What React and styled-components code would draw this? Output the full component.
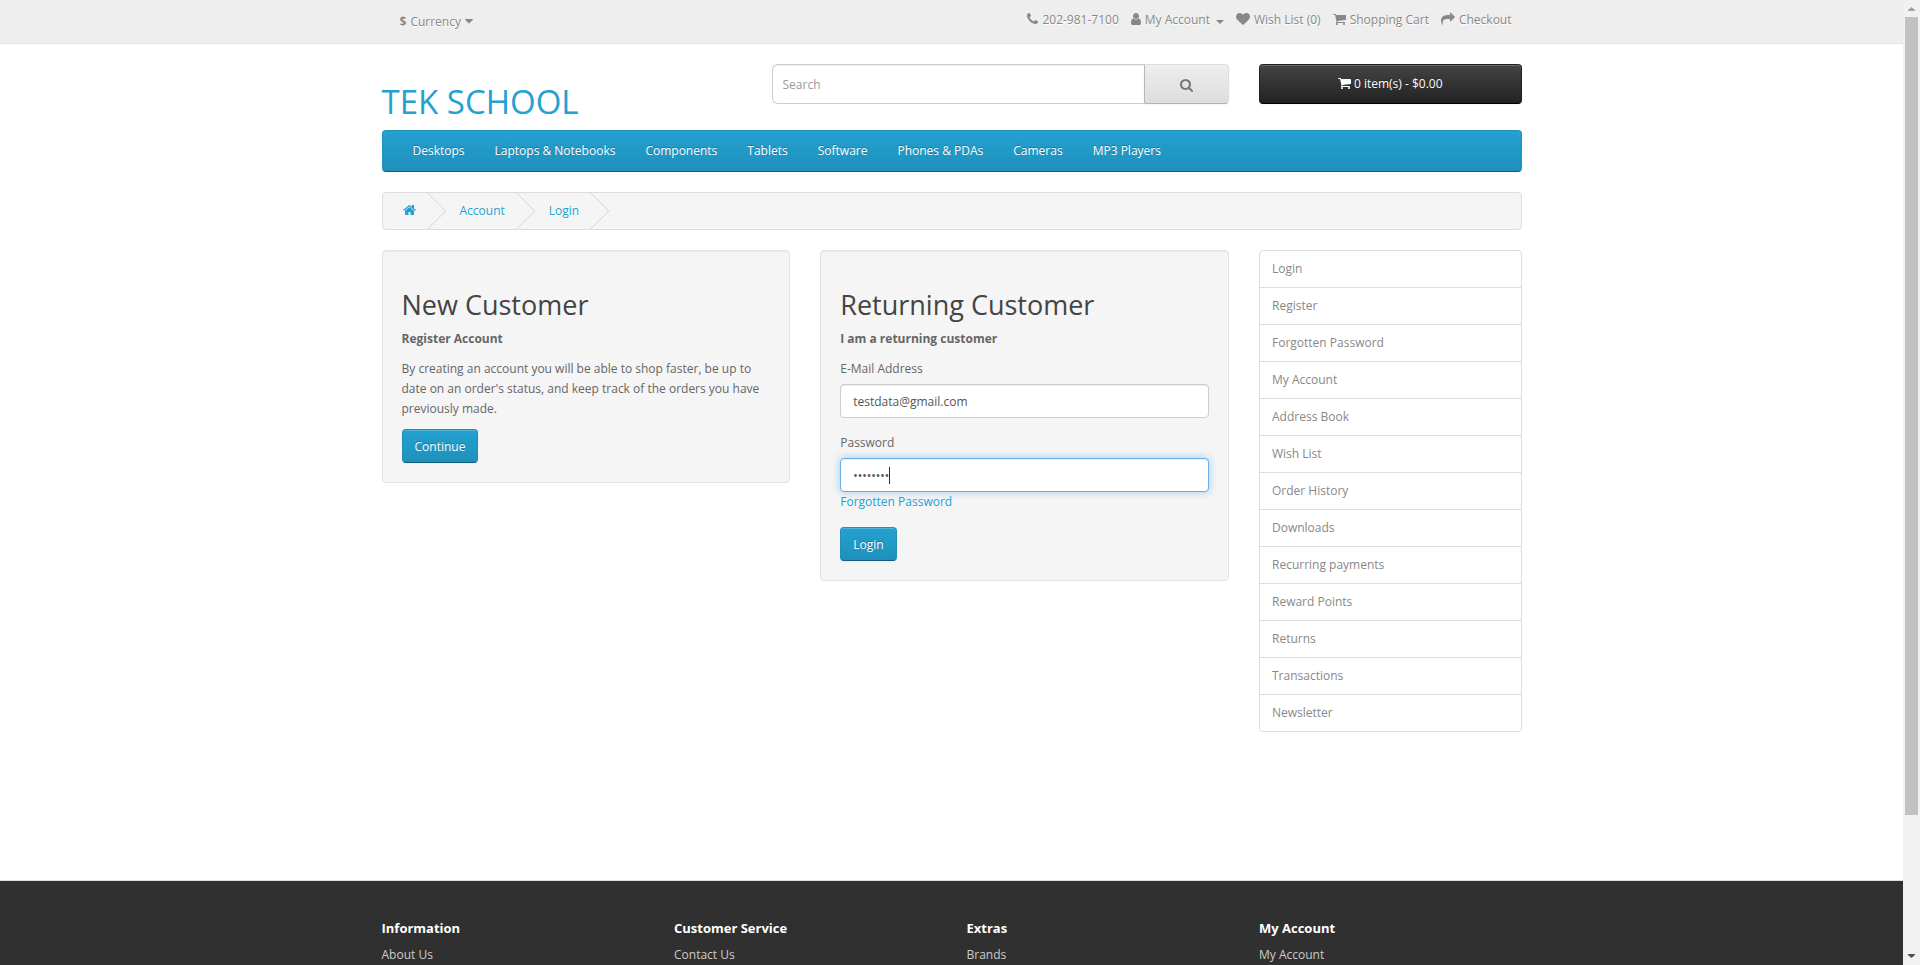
import React from "react";
import styled, { createGlobalStyle, css } from "styled-components";

const GlobalStyle = createGlobalStyle`
  *, *::before, *::after { box-sizing: border-box; }
  body {
    margin: 0;
    background: #fff;
    color: #666;
    font: 400 12px/20px "Open Sans", sans-serif;
  }
  a { color: #23a1d1; text-decoration: none; }
  h1, h2, h5, p, ul, ol { margin: 0; padding: 0; }
  ul, ol { list-style: none; }
  button, input { font: inherit; }
`;

/* ---------- icons: [first x, width, path] on a 1792 unit em ---------- */

const glyphs = {
  phone: [192, 1408, "M1600 1240q0 27-10 70.5t-21 68.5q-21 50-122 106-94 51-186 51-27 0-53-3.5t-57.5-12.5-47-14.5-55.5-20.5-49-18q-98-35-175-83-127-79-264-216t-216-264q-48-77-83-175-3-9-18-49t-20.5-55.5-14.5-47-12.5-57.5-3.5-53q0-92 51-186 56-101 106-122 25-11 68.5-21t70.5-10q14 0 21 3 18 6 53 76 11 19 30 54t35 63.5 31 53.5q3 4 17.5 25t21.5 35.5 7 28.5q0 20-28.5 50t-62 55-62 53-28.5 46q0 9 5 22.5t8.5 20.5 14 24 11.5 19q76 137 174 235t235 174q2 1 19 11.5t24 14 20.5 8.5 22.5 5q18 0 46-28.5t53-62 55-62 50-28.5q14 0 28.5 7t35.5 21.5 25 17.5q25 15 53.5 31t63.5 35 54 30q70 35 76 53 3 7 3 21z"],
  user: [256, 1280, "M1536 1399q0 109-62.5 187t-150.5 78h-854q-88 0-150.5-78t-62.5-187q0-85 8.5-160.5t31.5-152 58.5-131 94-89 134.5-34.5q131 128 313 128t313-128q76 0 134.5 34.5t94 89 58.5 131 31.5 152 8.5 160.5zm-256-887q0 159-112.5 271.5t-271.5 112.5-271.5-112.5-112.5-271.5 112.5-271.5 271.5-112.5 271.5 112.5 112.5 271.5z"],
  heart: [0, 1792, "M896 1664q-26 0-44-18l-624-602q-10-8-27.5-26t-55.5-65.5-68-97.5-53.5-121-23.5-138q0-220 127-344t351-124q62 0 126.5 21.5t120 58 95.5 68.5 76 68q36-36 76-68t95.5-68.5 120-58 126.5-21.5q224 0 351 124t127 344q0 221-229 450l-623 600q-18 18-44 18z"],
  cart: [64, 1664, "M704 1536q0 52-38 90t-90 38-90-38-38-90 38-90 90-38 90 38 38 90zm896 0q0 52-38 90t-90 38-90-38-38-90 38-90 90-38 90 38 38 90zm128-1088v512q0 24-16.5 42.5t-40.5 21.5l-1044 122q13 60 13 70 0 16-24 64h920q26 0 45 19t19 45-19 45-45 19h-1024q-26 0-45-19t-19-45q0-11 8-31.5t16-36 21.5-40 15.5-29.5l-177-823h-204q-26 0-45-19t-19-45 19-45 45-19h256q16 0 28.5 6.5t19.5 15.5 13 24.5 8 26 5.5 29.5 4.5 26h1201q26 0 45 19t19 45z"],
  share: [0, 1792, "M1792 640q0 26-19 45l-512 512q-19 19-45 19t-45-19-19-45v-256h-224q-98 0-175.5 6t-154 21.5-133 42.5-105.5 69.5-80 101-48.5 138.5-17.5 181q0 55 5 123 0 6 2.5 23.5t2.5 26.5q0 15-8.5 25t-23.5 10q-16 0-28-17-7-9-13-22t-13.5-30-10.5-24q-127-285-127-451 0-199 53-333 162-403 875-403h224v-256q0-26 19-45t45-19 45 19l512 512q19 19 19 45z"],
  search: [64, 1664, "M1216 832q0-185-131.5-316.5t-316.5-131.5-316.5 131.5-131.5 316.5 131.5 316.5 316.5 131.5 316.5-131.5 131.5-316.5zm512 832q0 52-38 90t-90 38q-54 0-90-38l-343-342q-179 124-399 124-143 0-273.5-55.5t-225-150-150-225-55.5-273.5 55.5-273.5 150-225 225-150 273.5-55.5 273.5 55.5 225 150 150 225 55.5 273.5q0 220-124 399l343 343q37 37 37 90z"],
  home: [64, 1664, "M1472 992v480q0 26-19 45t-45 19h-384v-384h-256v384h-384q-26 0-45-19t-19-45v-480q0-1 .5-3t.5-3l575-474 575 474q1 2 1 6zm223-69l-62 74q-8 9-21 11h-3q-13 0-21-7l-692-577-692 577q-12 8-24 7-13-2-21-11l-62-74q-8-10-7-23.5t11-21.5l719-599q32-26 76-26t76 26l244 204v-195q0-14 9-23t23-9h192q14 0 23 9t9 23v408l219 182q10 8 11 21.5t-7 23.5z"],
  caret: [384, 1024, "M1408 704q0 26-19 45l-448 448q-19 19-45 19t-45-19l-448-448q-19-19-19-45t19-45 45-19h896q26 0 45 19t19 45z"],
};

const IconSvg = styled.svg`
  display: block;
  flex: none;
  height: 14px;
  margin-bottom: 2px;
  fill: currentColor;
`;

function Icon({ name }) {
  const [x, width, d] = glyphs[name];
  return (
    <IconSvg viewBox={`${x} 0 ${width} 1792`} width={(width / 1792) * 14} aria-hidden="true">
      <path d={d} />
    </IconSvg>
  );
}

/* ---------- page frame ---------- */

const Frame = styled.div`
  display: flex;
  height: 100vh;
  overflow: hidden;
`;

const Page = styled.div`
  display: flex;
  flex: 1;
  flex-direction: column;
  min-width: 0;
  overflow: hidden;
`;

const Track = styled.div`
  display: flex;
  flex: none;
  flex-direction: column;
  width: 17px;
  background: #f1f1f1;
`;

const TrackArrow = styled.svg`
  flex: none;
  width: 17px;
  height: 17px;
  fill: ${(p) => p.$fill};
`;

const TrackBody = styled.div`
  flex: 1;
  padding: 0 2px;
`;

const Thumb = styled.div`
  height: calc(100% * 6 / 7);
  background: #c1c1c1;
`;

const Container = styled.div`
  width: 100%;
  max-width: 1170px;
  margin: 0 auto;
  padding: 0 15px;
`;

const Row = styled.div`
  display: flex;
  align-items: flex-start;
  margin: 0 -15px;
`;

const Col = styled.div`
  flex: 0 0 calc(100% * ${(p) => p.$span} / 12);
  min-width: 0;
  padding: 0 15px;
`;

/* ---------- top bar ---------- */

const TopBar = styled.nav`
  flex: none;
  min-height: 44px;
  padding: 4px 0 3px;
  margin-bottom: 20px;
  background: #eee;
  border-bottom: 1px solid #e2e2e2;
`;

const TopInner = styled(Container)`
  display: flex;
  justify-content: space-between;
`;

const CurrencyButton = styled.button`
  display: flex;
  align-items: center;
  gap: 4px;
  margin-left: 5px;
  padding: 8px 13px 6px;
  border: 0;
  background: none;
  color: #888;
  text-shadow: 0 1px 0 #fff;
`;

const TopLinks = styled.ul`
  display: flex;
  gap: 12px;
  padding: 6px 10px 0 0;
`;

const TopLink = styled.a`
  display: flex;
  align-items: center;
  gap: 4px;
  color: #888;
  text-shadow: 0 1px 0 #fff;
`;

const Caret = styled.span`
  margin: 3px 0 0 2px;
  border-top: 4px solid;
  border-right: 4px solid transparent;
  border-left: 4px solid transparent;
`;

/* ---------- header ---------- */

const Header = styled(Container).attrs({ as: "header" })`
  flex: none;
`;

const Logo = styled.h1`
  padding-top: 20px;
  font-weight: 400;
  font-size: 33px;
  line-height: 36px;
`;

const HeaderRow = styled(Row)`
  height: 66px;
`;

const gradientButton = css`
  border: 1px solid;
  border-radius: 4px;
  box-shadow: inset 0 1px 0 rgba(255, 255, 255, 0.2), 0 1px 2px rgba(0, 0, 0, 0.05);
`;

const SearchForm = styled.form`
  display: flex;
  height: 40px;
`;

const SearchInput = styled.input`
  flex: 1;
  min-width: 0;
  padding: 2px 10px 0;
  border: 1px solid #ccc;
  border-right: 0;
  border-radius: 6px 0 0 6px;
  box-shadow: inset 0 1px 1px rgba(0, 0, 0, 0.075);
  color: #555;
  &::placeholder { color: #999; }
`;

const SearchButton = styled.button`
  ${gradientButton}
  padding: 4px 35px 0;
  border-color: #ddd #ddd #b3b3b3 #b7b7b7;
  border-radius: 0 4px 4px 0;
  background: linear-gradient(#eee, #ddd);
  color: #777;
`;

const CartButton = styled.button`
  ${gradientButton}
  display: flex;
  align-items: center;
  justify-content: center;
  gap: 3px;
  width: 100%;
  height: 40px;
  border-color: #222 #222 #000;
  background: linear-gradient(#444, #222);
  color: #fff;
  text-shadow: 0 -1px 0 rgba(0, 0, 0, 0.25);
`;

const Menu = styled.nav`
  margin-bottom: 20px;
  padding: 0 15px;
  border: 1px solid;
  border-color: #1f90bb #1f90bb #145e7a;
  border-radius: 4px;
  background: linear-gradient(#23a1d1, #1f90bb);
`;

const MenuList = styled.ul`
  display: flex;
`;

const MenuLink = styled.a`
  display: block;
  padding: 10px 15px;
  color: #fff;
  text-shadow: 0 -1px 0 rgba(0, 0, 0, 0.25);
`;

/* ---------- main ---------- */

const Main = styled(Container).attrs({ as: "main" })`
  flex: none;
`;

const Breadcrumb = styled.ol`
  display: flex;
  gap: 4px;
  margin-bottom: 20px;
  padding: 8px 0;
  overflow: hidden;
  border: 1px solid #ddd;
  border-radius: 4px;
  background: #f5f5f5;
`;

const Crumb = styled.li`
  position: relative;
  padding: 0 20px;
  text-shadow: 0 1px 0 #fff;
  &::after {
    content: "";
    position: absolute;
    top: -3px;
    right: -5px;
    width: 26px;
    height: 26px;
    border-right: 1px solid #ddd;
    border-bottom: 1px solid #ddd;
    transform: rotate(-45deg);
  }
`;

const CrumbLink = styled.a`
  display: flex;
  align-items: center;
  height: 20px;
`;

const Content = styled(Col)`
  min-height: 600px;
`;

const Well = styled.section`
  padding: 19px;
  border: 1px solid #e3e3e3;
  border-radius: 4px;
  background: #f5f5f5;
  box-shadow: inset 0 1px 1px rgba(0, 0, 0, 0.05);
`;

const Title = styled.h2`
  margin: 20px 0 10px;
  color: #444;
  font-weight: 400;
  font-size: 27px;
  line-height: 29px;
`;

const Paragraph = styled.p`
  margin-bottom: 10px;
`;

const PrimaryButton = styled.button`
  ${gradientButton}
  display: block;
  height: 34px;
  padding: 2px 12px 0;
  border-color: #1f90bb #1f90bb #145e7a;
  background: linear-gradient(#23a1d1, #1f90bb);
  color: #fff;
  text-shadow: 0 -1px 0 rgba(0, 0, 0, 0.25);
`;

const Field = styled.div`
  margin-bottom: 15px;
`;

const Label = styled.label`
  display: block;
  margin-bottom: 5px;
`;

const focusRing = css`
  border-color: #66afe9;
  box-shadow: inset 0 1px 1px rgba(0, 0, 0, 0.075), 0 0 8px rgba(102, 175, 233, 0.6);
`;

const TextInput = styled.input`
  display: block;
  width: 100%;
  height: 34px;
  padding: 6px 12px;
  border: 1px solid #ccc;
  border-radius: 4px;
  outline: 0;
  background: #fff;
  box-shadow: inset 0 1px 1px rgba(0, 0, 0, 0.075);
  color: #555;
  ${(p) => p.$active && focusRing}
`;

const CursorBox = styled.div`
  position: relative;
  &::after {
    content: "";
    position: absolute;
    top: 9px;
    left: 49px;
    width: 1px;
    height: 17px;
    background: #333;
  }
`;

const LinkList = styled.ul`
  overflow: hidden;
  border: 1px solid #ddd;
  border-radius: 4px;
`;

const LinkItem = styled.li`
  & + & { border-top: 1px solid #ddd; }
`;

const SideLink = styled.a`
  display: block;
  padding: 8px 12px;
  color: #888;
`;

/* ---------- footer ---------- */

const Footer = styled.footer`
  flex: 1 0 auto;
  margin-top: 30px;
  padding-top: 30px;
  border-top: 1px solid #ddd;
  background: #303030;
`;

const FooterTitle = styled.h5`
  margin: 10px 0;
  color: #fff;
  font-weight: 700;
  font-size: 13px;
  line-height: 14px;
`;

const FooterLink = styled.a`
  color: #ccc;
`;

const menu = ["Desktops", "Laptops & Notebooks", "Components", "Tablets", "Software", "Phones & PDAs", "Cameras", "MP3 Players"];

const sideLinks = [
  "Login", "Register", "Forgotten Password", "My Account", "Address Book", "Wish List", "Order History",
  "Downloads", "Recurring payments", "Reward Points", "Returns", "Transactions", "Newsletter",
];

const topLinks = [
  { icon: "phone", text: "202-981-7100" },
  { icon: "user", text: "My Account", caret: true },
  { icon: "heart", text: "Wish List (0)" },
  { icon: "cart", text: "Shopping Cart" },
  { icon: "share", text: "Checkout" },
];

const footerColumns = [
  ["Information", "About Us"],
  ["Customer Service", "Contact Us"],
  ["Extras", "Brands"],
  ["My Account", "My Account"],
];

export default function App() {
  return (
    <Frame>
      <GlobalStyle />
      <Page>
        <TopBar aria-label="Account">
          <TopInner>
            <CurrencyButton type="button">
              <strong>$</strong>
              <span>Currency</span>
              <Icon name="caret" />
            </CurrencyButton>
            <TopLinks>
              {topLinks.map((link) => (
                <li key={link.text}>
                  <TopLink href="#">
                    <Icon name={link.icon} />
                    <span>{link.text}</span>
                    {link.caret && <Caret />}
                  </TopLink>
                </li>
              ))}
            </TopLinks>
          </TopInner>
        </TopBar>

        <Header>
          <HeaderRow>
            <Col $span={4}>
              <Logo><a href="#">TEK SCHOOL</a></Logo>
            </Col>
            <Col $span={5}>
              <SearchForm role="search">
                <SearchInput type="text" placeholder="Search" aria-label="Search" />
                <SearchButton type="button" aria-label="Submit search"><Icon name="search" /></SearchButton>
              </SearchForm>
            </Col>
            <Col $span={3}>
              <CartButton type="button">
                <Icon name="cart" />
                <span>0 item(s) - $0.00</span>
              </CartButton>
            </Col>
          </HeaderRow>
          <Menu aria-label="Categories">
            <MenuList>
              {menu.map((item) => (
                <li key={item}><MenuLink href="#">{item}</MenuLink></li>
              ))}
            </MenuList>
          </Menu>
        </Header>

        <Main>
          <Breadcrumb>
            <Crumb><CrumbLink href="#" aria-label="Home"><Icon name="home" /></CrumbLink></Crumb>
            <Crumb><CrumbLink href="#">Account</CrumbLink></Crumb>
            <Crumb><CrumbLink href="#">Login</CrumbLink></Crumb>
          </Breadcrumb>
          <Row>
            <Content $span={9}>
              <Row>
                <Col $span={6}>
                  <Well>
                    <Title>New Customer</Title>
                    <Paragraph><strong>Register Account</strong></Paragraph>
                    <Paragraph>
                      By creating an account you will be able to shop faster, be up to date on an order's status, and
                      keep track of the orders you have previously made.
                    </Paragraph>
                    <PrimaryButton type="button">Continue</PrimaryButton>
                  </Well>
                </Col>
                <Col $span={6}>
                  <Well>
                    <Title>Returning Customer</Title>
                    <Paragraph><strong>I am a returning customer</strong></Paragraph>
                    <form>
                      <Field>
                        <Label htmlFor="input-email">E-Mail Address</Label>
                        <TextInput id="input-email" type="text" defaultValue="testdata@gmail.com" />
                      </Field>
                      <Field>
                        <Label htmlFor="input-password">Password</Label>
                        <CursorBox>
                          <TextInput id="input-password" type="password" defaultValue="password" $active />
                        </CursorBox>
                        <a href="#">Forgotten Password</a>
                      </Field>
                      <PrimaryButton type="button">Login</PrimaryButton>
                    </form>
                  </Well>
                </Col>
              </Row>
            </Content>
            <Col as="aside" $span={3}>
              <LinkList>
                {sideLinks.map((item) => (
                  <LinkItem key={item}><SideLink href="#">{item}</SideLink></LinkItem>
                ))}
              </LinkList>
            </Col>
          </Row>
        </Main>

        <Footer>
          <Container>
            <Row>
              {footerColumns.map(([title, link]) => (
                <Col key={title} $span={3}>
                  <FooterTitle>{title}</FooterTitle>
                  <FooterLink href="#">{link}</FooterLink>
                </Col>
              ))}
            </Row>
          </Container>
        </Footer>
      </Page>

      <Track aria-hidden="true">
        <TrackArrow viewBox="0 0 17 17" $fill="#a3a3a3"><path d="M5 11h7v-1L8.500 7 5 10z" /></TrackArrow>
        <TrackBody><Thumb /></TrackBody>
        <TrackArrow viewBox="0 0 17 17" $fill="#505050"><path d="M5 6h7v1L8.500 10 5 7z" /></TrackArrow>
      </Track>
    </Frame>
  );
}
